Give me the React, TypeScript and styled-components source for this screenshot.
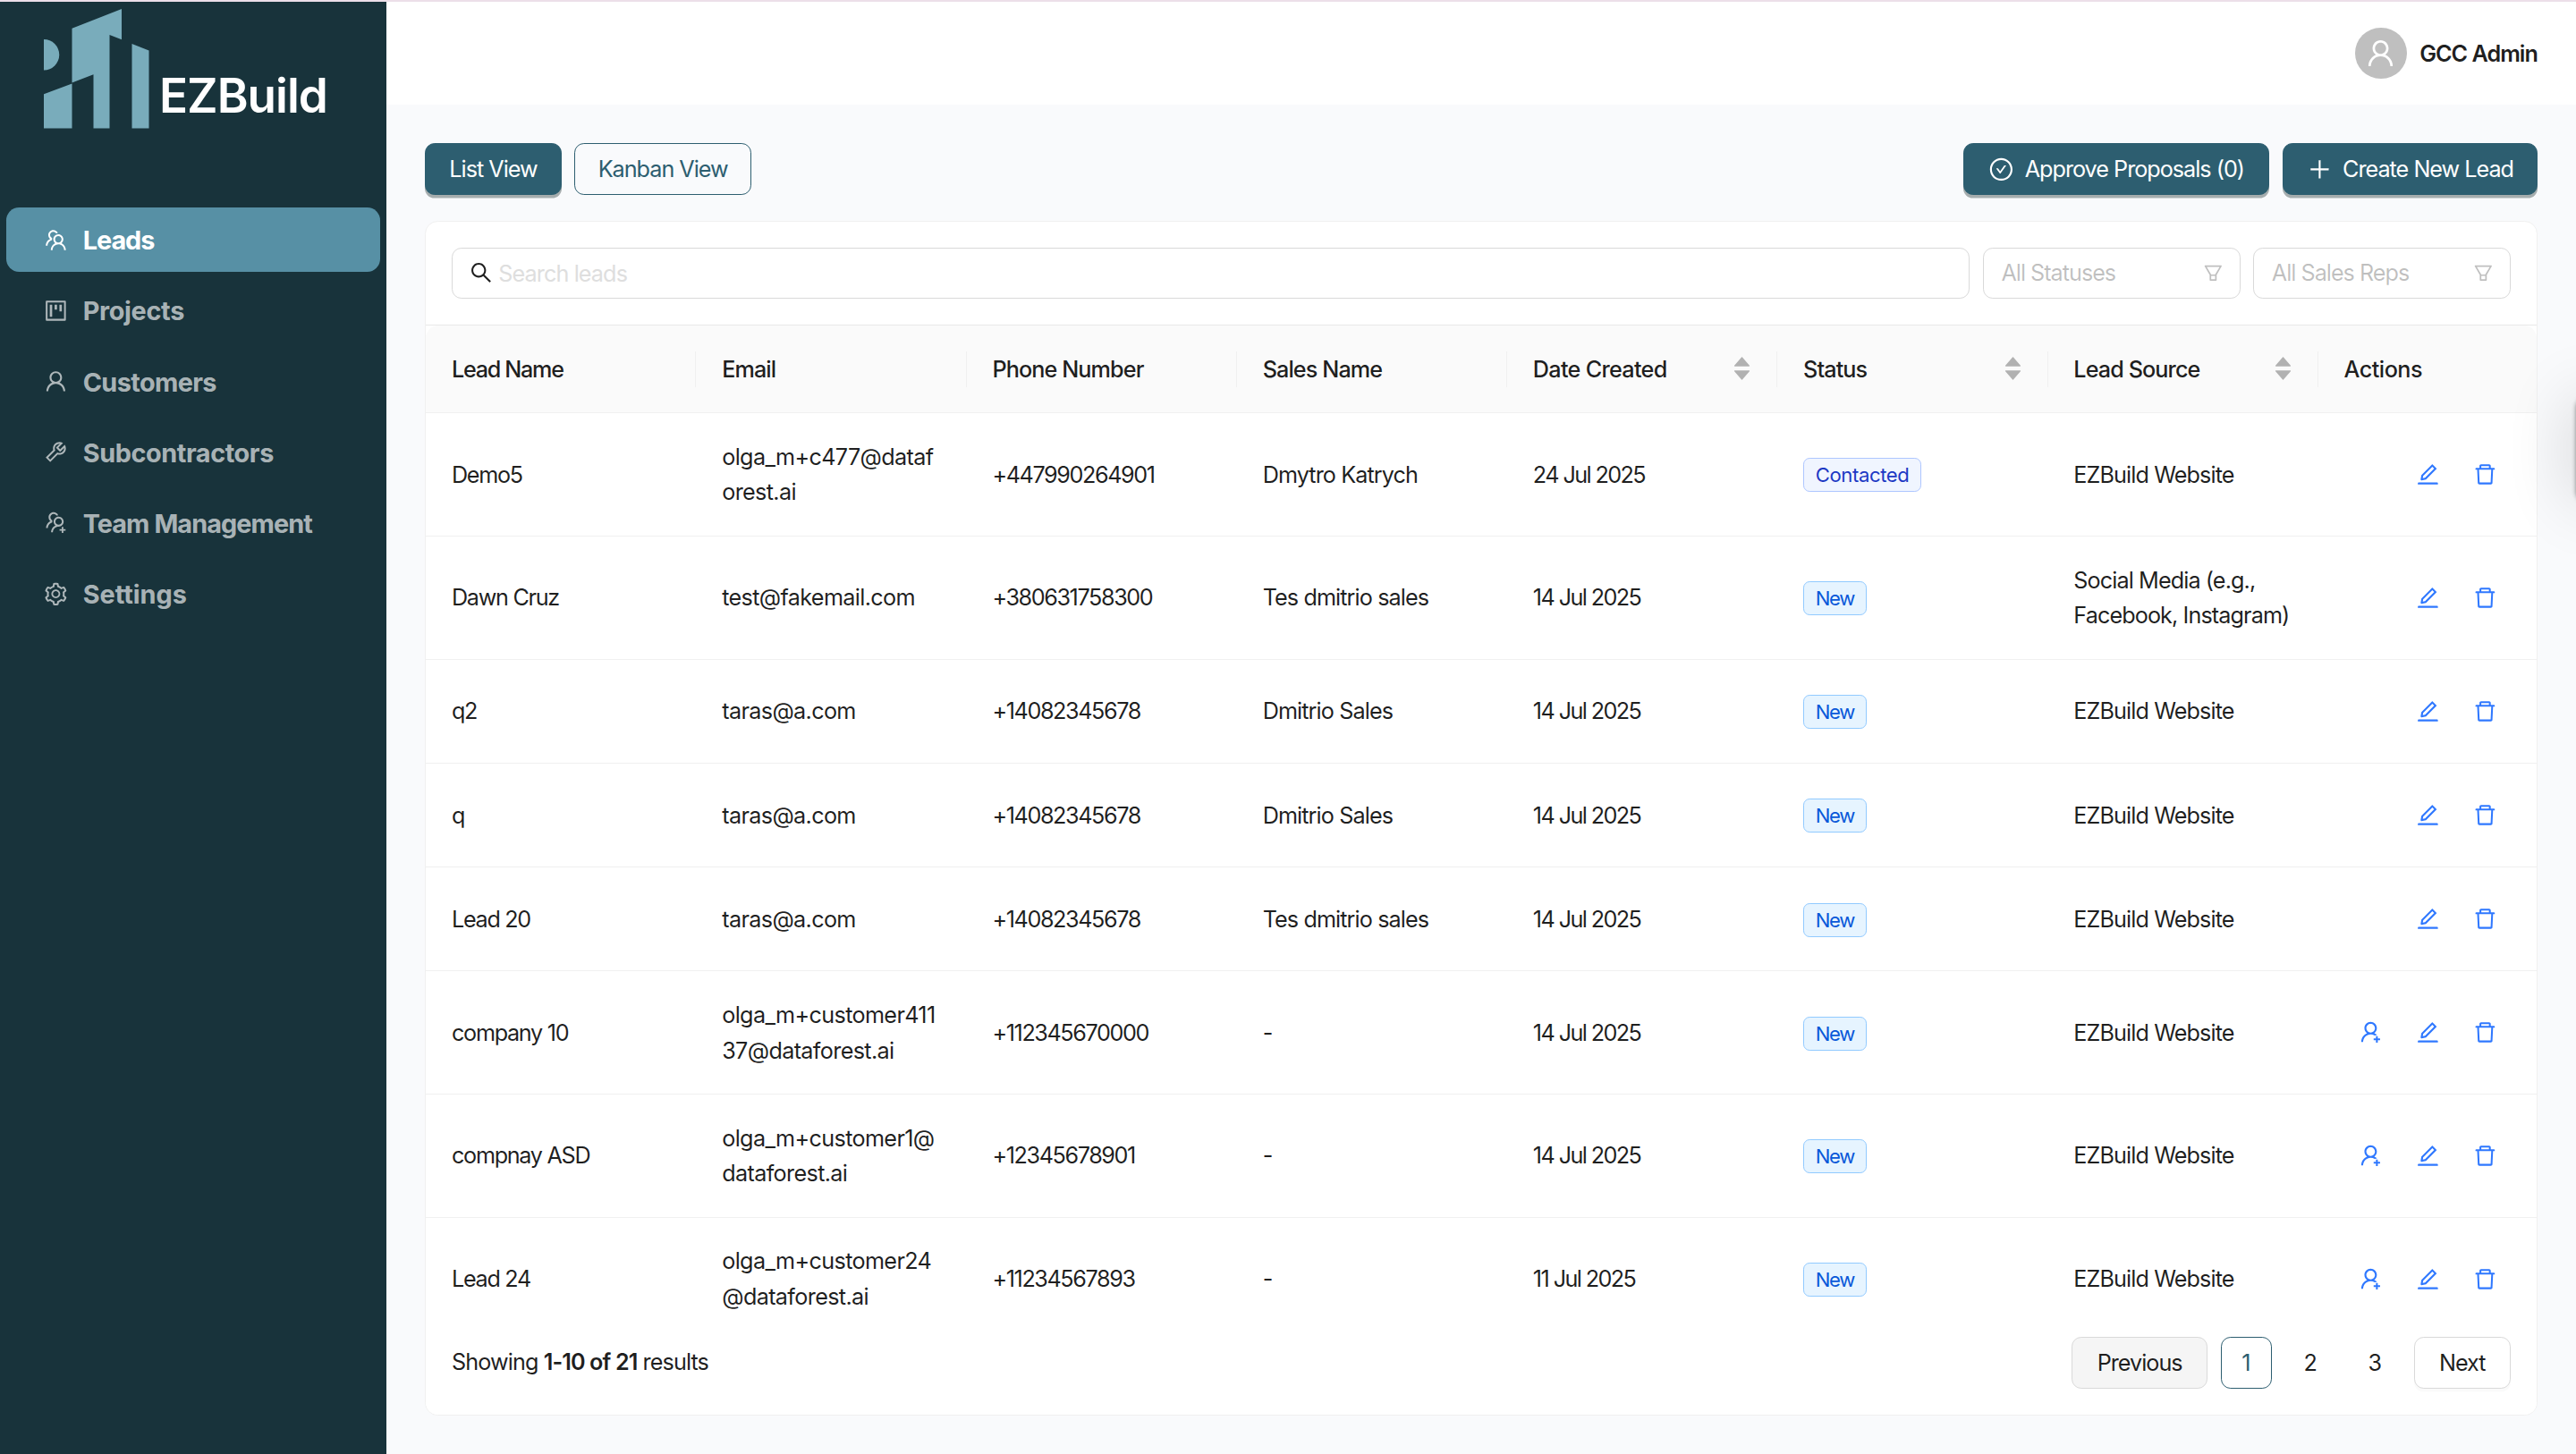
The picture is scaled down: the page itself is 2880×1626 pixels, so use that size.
import { useState } from 'react';
import {
  AiFillCaretDown,
  AiFillCaretUp,
  AiOutlineCheckCircle,
  AiOutlineDelete,
  AiOutlineEdit,
  AiOutlineFilter,
  AiOutlinePlus,
  AiOutlineProject,
  AiOutlineSearch,
  AiOutlineSetting,
  AiOutlineTeam,
  AiOutlineTool,
  AiOutlineUser,
  AiOutlineUserAdd,
  AiOutlineUsergroupAdd,
} from 'react-icons/ai';
import styled, { createGlobalStyle } from 'styled-components';

const colors = {
  sidebar: '#18333b',
  sidebarActive: '#5790a5',
  logo: '#79acbb',
  primary: '#2d5e70',
  page: '#f9fafc',
  border: '#d9d9d9',
  split: '#f0f0f0',
  text: 'rgba(0, 0, 0, 0.88)',
  muted: 'rgba(0, 0, 0, 0.25)',
  link: '#2f78ff',
};

const menu = [
  { label: 'Leads', icon: AiOutlineTeam, spacing: -1 },
  { label: 'Projects', icon: AiOutlineProject, spacing: -0.3 },
  { label: 'Customers', icon: AiOutlineUser, spacing: -0.6 },
  { label: 'Subcontractors', icon: AiOutlineTool, spacing: -0.4 },
  { label: 'Team Management', icon: AiOutlineUsergroupAdd, spacing: -0.9 },
  { label: 'Settings', icon: AiOutlineSetting, spacing: 0 },
];

const columns = [
  { title: 'Lead Name', spacing: -1.3 },
  { title: 'Email' },
  { title: 'Phone Number' },
  { title: 'Sales Name' },
  { title: 'Date Created', sortable: true, spacing: -0.7 },
  { title: 'Status', sortable: true },
  { title: 'Lead Source', sortable: true },
  { title: 'Actions', spacing: -0.5 },
];

type Lead = {
  name: string;
  email: string[];
  phone: string;
  sales: string;
  date: string;
  status: 'New' | 'Contacted';
  source: string[];
  assignable?: boolean;
};

const website = ['EZBuild Website'];

const leads: Lead[] = [
  { name: 'Demo5', email: ['olga_m+c477@dataf', 'orest.ai'], phone: '+447990264901', sales: 'Dmytro Katrych', date: '24 Jul 2025', status: 'Contacted', source: website },
  { name: 'Dawn Cruz', email: ['test@fakemail.com'], phone: '+380631758300', sales: 'Tes dmitrio sales', date: '14 Jul 2025', status: 'New', source: ['Social Media (e.g.,', 'Facebook, Instagram)'] },
  { name: 'q2', email: ['taras@a.com'], phone: '+14082345678', sales: 'Dmitrio Sales', date: '14 Jul 2025', status: 'New', source: website },
  { name: 'q', email: ['taras@a.com'], phone: '+14082345678', sales: 'Dmitrio Sales', date: '14 Jul 2025', status: 'New', source: website },
  { name: 'Lead 20', email: ['taras@a.com'], phone: '+14082345678', sales: 'Tes dmitrio sales', date: '14 Jul 2025', status: 'New', source: website },
  { name: 'company 10', email: ['olga_m+customer411', '37@dataforest.ai'], phone: '+112345670000', sales: '-', date: '14 Jul 2025', status: 'New', source: website, assignable: true },
  { name: 'compnay ASD', email: ['olga_m+customer1@', 'dataforest.ai'], phone: '+12345678901', sales: '-', date: '14 Jul 2025', status: 'New', source: website, assignable: true },
  { name: 'Lead 24', email: ['olga_m+customer24', '@dataforest.ai'], phone: '+11234567893', sales: '-', date: '11 Jul 2025', status: 'New', source: website, assignable: true },
];

const Lines = ({ lines }: { lines: string[] }) => (
  <div>
    {lines.map((line) => (
      <Line key={line}>{line}</Line>
    ))}
  </div>
);

const App = () => {
  const [active, setActive] = useState('Leads');
  const [page, setPage] = useState(1);

  return (
    <>
      <GlobalStyle />
      <StyledLayout>
        <StyledSidebar>
          <StyledLogo>
            <svg width="168" height="146" viewBox="0 0 168 146" fill={colors.logo}>
              <path d="M49 42a17.2 17.2 0 0 1 0 34.5z" />
              <path d="M80.5 29.7 136 8v34.3l-13.5-5.2v104.4h-18V81.2l-24 9.3z" />
              <path d="M49 103.3 80.5 91.5v50H49z" />
              <path d="m147.5 47 19 7.4v87.1h-19z" />
            </svg>
            <span>EZBuild</span>
          </StyledLogo>
          <StyledMenu>
            {menu.map(({ label, icon: Icon, spacing }) => (
              <MenuItem
                key={label}
                $active={label === active}
                $spacing={spacing}
                onClick={() => setActive(label)}
              >
                <Icon className="icon" />
                {label}
              </MenuItem>
            ))}
          </StyledMenu>
        </StyledSidebar>

        <StyledMain>
          <StyledHeader>
            <Avatar>
              <AiOutlineUser />
            </Avatar>
            <span>GCC Admin</span>
          </StyledHeader>

          <StyledContent>
            <Toolbar>
              <Button $variant="primary" $width={152.6}>
                List View
              </Button>
              <Button $variant="outlined" $width={198}>
                Kanban View
              </Button>
              <Spacer />
              <Button $variant="primary" $width={342.6}>
                <AiOutlineCheckCircle className="icon" />
                Approve Proposals (0)
              </Button>
              <Button $variant="primary" $width={285}>
                <AiOutlinePlus className="icon" />
                Create New Lead
              </Button>
            </Toolbar>

            <Card>
              <Filters>
                <SearchField>
                  <AiOutlineSearch className="icon" />
                  <input placeholder="Search leads" />
                </SearchField>
                <Select>
                  All Statuses
                  <AiOutlineFilter />
                </Select>
                <Select>
                  All Sales Reps
                  <AiOutlineFilter />
                </Select>
              </Filters>

              <Table>
                <HeadRow>
                  {columns.map(({ title, sortable, spacing }) => (
                    <HeadCell key={title} $spacing={spacing}>
                      {title}
                      {sortable && (
                        <Sorter>
                          <AiFillCaretUp />
                          <AiFillCaretDown />
                        </Sorter>
                      )}
                    </HeadCell>
                  ))}
                </HeadRow>
                {leads.map((lead) => (
                  <Row key={lead.name}>
                    <Cell $spacing={-1.3}>{lead.name}</Cell>
                    <Cell $spacing={-0.65}>
                      <Lines lines={lead.email} />
                    </Cell>
                    <Cell $spacing={-1.4}>{lead.phone}</Cell>
                    <Cell>{lead.sales}</Cell>
                    <Cell $spacing={-1.6}>{lead.date}</Cell>
                    <Cell>
                      <Tag $status={lead.status}>{lead.status}</Tag>
                    </Cell>
                    <Cell>
                      <Lines lines={lead.source} />
                    </Cell>
                    <Actions>
                      {lead.assignable && (
                        <IconButton aria-label="Assign">
                          <AiOutlineUserAdd />
                        </IconButton>
                      )}
                      <IconButton aria-label="Edit">
                        <AiOutlineEdit />
                      </IconButton>
                      <IconButton aria-label="Delete">
                        <AiOutlineDelete />
                      </IconButton>
                    </Actions>
                  </Row>
                ))}
              </Table>

              <Footer>
                <p>
                  Showing <b>1-10 of 21</b> results
                </p>
                <Spacer />
                <Button $variant="disabled" $width={152}>
                  Previous
                </Button>
                {[1, 2, 3].map((n) => (
                  <PageButton key={n} $active={n === page} onClick={() => setPage(n)}>
                    {n}
                  </PageButton>
                ))}
                <Button $variant="default" $width={108.5}>
                  Next
                </Button>
              </Footer>
            </Card>
          </StyledContent>
        </StyledMain>
        <FloatingHandle />
      </StyledLayout>
    </>
  );
};

// 1rem is 10 design pixels
const GlobalStyle = createGlobalStyle`
  html {
    font-size: 18px;
  }
  *, *::before, *::after {
    box-sizing: border-box;
  }
  body {
    margin: 0;
    overflow: hidden;
    font-family: Inter, 'Liberation Sans', sans-serif;
    font-size: 1.4rem;
    line-height: 2.2rem;
    letter-spacing: -0.9px;
    color: ${colors.text};
    background-color: ${colors.page};
  }
  button, input {
    font: inherit;
    letter-spacing: inherit;
    color: inherit;
  }
  p {
    margin: 0;
  }
  svg {
    display: block;
    flex: none;
  }
`;
const StyledLayout = styled.div`
  position: relative;
  display: flex;
  width: 100%;
  height: 1626px;
  overflow: hidden;
  border-top: 2px solid #ecdfe9;
`;
const StyledSidebar = styled.aside`
  width: 24rem;
  flex: none;
  background-color: ${colors.sidebar};
`;
const StyledLogo = styled.div`
  display: flex;
  align-items: flex-end;
  height: 146px;

  span {
    margin-left: 10px;
    padding-bottom: 11px;
    font-size: 53px;
    font-weight: 600;
    line-height: 60px;
    letter-spacing: -1px;
    color: #fff;
  }
`;
const StyledMenu = styled.nav`
  display: flex;
  flex-direction: column;
  gap: 0.4rem;
  padding: 84px 0.4rem 0;
`;
const MenuItem = styled.a<{ $active: boolean; $spacing: number }>`
  display: flex;
  align-items: center;
  gap: 0.9rem;
  height: 4rem;
  padding: 2px 0 0 2.25rem;
  border-radius: 0.8rem;
  font-size: 1.6rem;
  font-weight: 700;
  letter-spacing: ${({ $spacing }) => $spacing}px;
  cursor: pointer;
  color: ${({ $active }) => ($active ? '#fff' : 'rgba(255, 255, 255, 0.65)')};
  background-color: ${({ $active }) => ($active ? colors.sidebarActive : 'transparent')};

  .icon {
    width: 1.6rem;
    height: 1.6rem;
    margin-top: -2px;
  }
`;
const StyledMain = styled.main`
  display: flex;
  flex-direction: column;
  flex: 1;
  min-width: 0;
`;
const StyledHeader = styled.header`
  display: flex;
  align-items: center;
  justify-content: flex-end;
  gap: 0.8rem;
  height: 6.4rem;
  padding: 0 2.4rem;
  font-weight: 600;
  letter-spacing: -1px;
  background-color: #fff;

  span {
    padding-top: 2px;
  }
`;
const Avatar = styled.div`
  display: flex;
  align-items: center;
  justify-content: center;
  width: 3.2rem;
  height: 3.2rem;
  border-radius: 50%;
  color: #fff;
  background-color: #bfbfbf;

  svg {
    width: 37px;
    height: 37px;
  }
`;
const StyledContent = styled.section`
  display: flex;
  flex-direction: column;
  flex: 1;
  min-height: 0;
  gap: 1.6rem;
  padding: 2.4rem;
`;
const Toolbar = styled.div`
  display: flex;
  gap: 0.8rem;
`;
const Spacer = styled.div`
  flex: 1;
`;
const variants = {
  primary: `
    color: #fff;
    background-color: ${colors.primary};
    border-color: ${colors.primary};
    box-shadow: 0 0.2rem 0 #a6adae;
  `,
  outlined: `
    color: ${colors.primary};
    background-color: transparent;
    border-color: ${colors.primary};
  `,
  default: `
    background-color: #fff;
    border-color: ${colors.border};
    box-shadow: 0 0.2rem 0 rgba(0, 0, 0, 0.02);
  `,
  disabled: `
    background-color: #f5f5f5;
    border-color: ${colors.border};
  `,
};
const Button = styled.button<{ $variant: keyof typeof variants; $width: number }>`
  display: flex;
  align-items: center;
  justify-content: center;
  gap: 0.65rem;
  width: ${({ $width }) => $width}px;
  height: 3.2rem;
  padding: 2px 0 0;
  white-space: nowrap;
  letter-spacing: -1px;
  border: 1px solid;
  border-radius: 0.6rem;
  cursor: pointer;
  ${({ $variant }) => variants[$variant]}

  .icon {
    width: 1.6rem;
    height: 1.6rem;
    margin-top: -2px;
  }
`;
const Card = styled.div`
  display: flex;
  flex-direction: column;
  flex: 1;
  min-height: 0;
  overflow: hidden;
  border: 1px solid ${colors.split};
  border-radius: 0.8rem;
  background-color: #fff;
`;
const Filters = styled.div`
  display: flex;
  gap: 0.8rem;
  padding: 1.6rem;
  border-bottom: 1px solid #e8e8e8;
`;
const SearchField = styled.label`
  display: flex;
  align-items: center;
  flex: 1;
  height: 3.2rem;
  padding: 0 1rem;
  border: 1px solid ${colors.border};
  border-radius: 0.6rem;

  .icon {
    width: 1.55rem;
    height: 1.55rem;
  }
  input {
    flex: 1;
    padding: 2px 0 0;
    margin-left: 0.3rem;
    border: none;
    outline: none;
    background: none;
  }
  input::placeholder {
    color: #dedede;
  }
`;
const Select = styled.div`
  display: flex;
  align-items: center;
  justify-content: space-between;
  width: 16rem;
  height: 3.2rem;
  padding: 0 0.95rem 0 1.1rem;
  letter-spacing: -1px;
  border: 1px solid ${colors.border};
  border-radius: 0.6rem;
  color: ${colors.muted};

  svg {
    width: 1.37rem;
    height: 1.37rem;
  }
`;
const Table = styled.div`
  flex: 1;
  min-height: 0;
  overflow: hidden;
`;
const Row = styled.div`
  display: grid;
  grid-template-columns: repeat(7, 16.79rem) 1fr;
  align-items: center;
  min-height: calc(6.4rem + 1px);
  border-bottom: 1px solid ${colors.split};
`;
const HeadRow = styled(Row)`
  min-height: 0;
  font-weight: 500;
  border-radius: 0.8rem 0.8rem 0 0;
  background-color: #fafafa;
`;
const Cell = styled.div<{ $spacing?: number }>`
  min-width: 0;
  padding: 1.65rem 1.6rem 1.55rem;
  white-space: nowrap;
  letter-spacing: ${({ $spacing }) => ($spacing ? `${$spacing}px` : 'inherit')};
`;
const HeadCell = styled(Cell)`
  position: relative;
  display: flex;
  align-items: center;
  justify-content: space-between;

  &:not(:last-child)::after {
    content: '';
    position: absolute;
    right: 0;
    width: 1px;
    height: 40px;
    background-color: ${colors.split};
  }
`;
const Line = styled.div`
  height: 2.2rem;
`;
const Sorter = styled.span`
  display: flex;
  flex-direction: column;
  margin: -3px -2px 0 0;
  color: rgba(0, 0, 0, 0.29);

  svg {
    width: 25px;
    height: 25px;
  }
  svg + svg {
    margin-top: -10px;
  }
`;
const Tag = styled.span<{ $status: Lead['status'] }>`
  display: block;
  width: fit-content;
  padding: 0 0.7rem;
  font-size: 1.23rem;
  line-height: 2rem;
  letter-spacing: ${({ $status }) => ($status === 'New' ? '-1.3px' : '-0.4px')};
  border: 1px solid ${({ $status }) => ($status === 'New' ? '#91caff' : '#adc6ff')};
  border-radius: 0.4rem;
  color: ${({ $status }) => ($status === 'New' ? '#0958d9' : '#1d39c4')};
  background-color: ${({ $status }) => ($status === 'New' ? '#e6f4ff' : '#f0f5ff')};
`;
const Actions = styled.div`
  display: flex;
  justify-content: flex-end;
  gap: 0.35rem;
  padding-right: 1.6rem;
`;
const IconButton = styled.button`
  display: flex;
  align-items: center;
  justify-content: center;
  width: 3.2rem;
  height: 3.2rem;
  padding: 0;
  border: none;
  background: none;
  cursor: pointer;
  color: ${colors.link};

  svg {
    width: 1.6rem;
    height: 1.6rem;
  }
`;
const Footer = styled.footer`
  display: flex;
  align-items: center;
  gap: 0.8rem;
  padding: 0 1.6rem 1.6rem;
  background-color: #fff;

  b {
    font-weight: 600;
  }
`;
const PageButton = styled.button<{ $active: boolean }>`
  width: 3.2rem;
  height: 3.2rem;
  padding: 1px 1px 0 0;
  border: 1px solid ${({ $active }) => ($active ? colors.primary : 'transparent')};
  border-radius: 0.6rem;
  background: none;
  cursor: pointer;
  color: ${({ $active }) => ($active ? colors.primary : 'inherit')};
`;
const FloatingHandle = styled.div`
  position: absolute;
  top: 441px;
  right: -40px;
  width: 40px;
  height: 120px;
  border-radius: 14px;
  background-color: #fff;
  box-shadow:
    0 0 5px rgba(0, 0, 0, 0.45),
    0 0 75px rgba(0, 0, 0, 0.2);
`;

export default App;
